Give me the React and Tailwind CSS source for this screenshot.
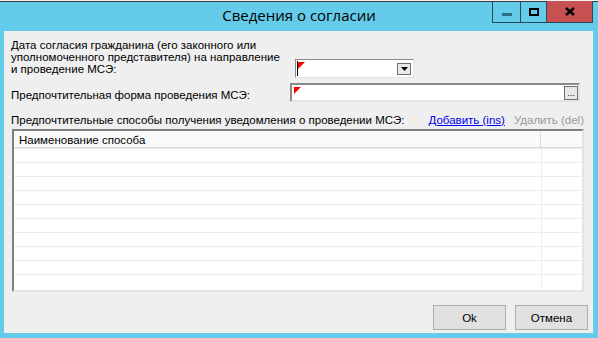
const Flag = () => (
  <svg width="7" height="7" viewBox="0 0 7 7" className="absolute left-[2px] top-[2px]">
    <polygon points="0,0 7,0 0,7" fill="#ff0000" />
  </svg>
);

const App = () => {
  const rows = Array.from({ length: 10 });

  return (
    <div
      className="w-[598px] h-[338px] bg-[#65cbea] flex flex-col overflow-hidden text-black"
      style={{ fontFamily: '"Liberation Sans", Arial, sans-serif' }}
    >
      {/* Title bar */}
      <div className="relative h-[31px] shrink-0">
        <div className="h-[1px] bg-[#f2f2f2]" />
        <div className="h-[1px] bg-[#3a3a3a]" />
        <div
          className="absolute inset-x-0 top-[4px] text-center text-[15px] leading-[22px]"
          style={{ fontFamily: '"Open Sans", "Noto Sans", sans-serif' }}
        >
          Сведения о согласии
        </div>
        <div className="absolute right-[5px] top-[1px] flex h-[22px] border border-[#2b4a55] border-t-0">
          <div className="w-[28px] flex items-center justify-center border-r border-[#2b4a55]">
            <div className="w-[10px] h-[3px] bg-[#2d6e85] mt-[5px]" />
          </div>
          <div className="w-[26px] flex items-center justify-center border-r border-[#2b4a55]">
            <div className="w-[10px] h-[8px] border-2 border-black" />
          </div>
          <div className="w-[45px] flex items-center justify-center bg-[#c75050]">
            <svg width="10" height="9" viewBox="0 0 10 9">
              <path d="M1 1 L9 8 M9 1 L1 8" stroke="#000" strokeWidth="2.4" />
            </svg>
          </div>
        </div>
      </div>

      {/* Client area */}
      <div className="ml-[4px] mr-[5px] h-[302px] bg-[#efefef] flex flex-col text-[11.5px] leading-[12px]">
        {/* Row 1 */}
        <div className="flex mt-[8px]">
          <div className="w-[284px] pl-[7px]">
            <div>Дата согласия гражданина (его законного или</div>
            <div>уполномоченного представителя) на направление</div>
            <div>и проведение МСЭ:</div>
          </div>
          <div className="ml-[7px] mt-[20px] relative w-[119px] h-[19px] bg-white border border-[#8a8a8a] border-r-[#e3e3e3] border-b-[#e3e3e3]">
            <Flag />
            <div className="absolute left-[1px] top-[1px] w-[1px] h-[15px] bg-black" />
            <div className="absolute right-[2px] top-[3px] w-[14px] h-[12px] bg-[#e8e8e8] border border-[#6f6f6f] flex items-center justify-center">
              <svg width="7" height="4" viewBox="0 0 7 4">
                <polygon points="0,0 7,0 3.5,4" fill="#000" />
              </svg>
            </div>
          </div>
        </div>

        {/* Row 2 */}
        <div className="flex mt-[5px]">
          <div className="w-[286px] pl-[7px] pt-[6px]">Предпочтительная форма проведения МСЭ:</div>
          <div className="relative w-[290px] h-[19px] bg-white border-2 border-[#8a8a8a] border-r-[#e3e3e3] border-b-[#e3e3e3]">
            <Flag />
            <div className="absolute right-[0px] top-[1px] w-[14px] h-[14px] bg-[#e8e8e8] border border-[#6f6f6f] flex items-end justify-center text-[9px] leading-[9px] pb-[1px]">
              ...
            </div>
          </div>
        </div>

        {/* Row 3 */}
        <div className="flex mt-[12px] pl-[7px] pr-[9px]">
          <div className="flex-1">Предпочтительные способы получения уведомления о проведении МСЭ:</div>
          <span className="text-[#0000ee] underline">Добавить (ins)</span>
          <span className="ml-[9px] text-[#9a9a9a]">Удалить (del)</span>
        </div>

        {/* Grid */}
        <div className="mt-[3px] ml-[8px] w-[572px] h-[163px] bg-white border-2 border-[#808080] border-r-[#e3e3e3] border-b-[#e3e3e3] overflow-hidden">
          <div className="flex h-[17px] bg-[#fafafa] border-b border-[#d8d8d8]">
            <div className="w-[527px] pl-[5px] pt-[3px] border-r border-[#dcdcdc]">Наименование способа</div>
            <div className="flex-1" />
          </div>
          {rows.map((_, i) => (
            <div key={i} className="flex h-[14px] border-t border-[#ececec]">
              <div className="w-[528px] border-r border-[#ececec]" />
              <div className="flex-1" />
            </div>
          ))}
        </div>

        {/* Buttons */}
        <div className="flex justify-end gap-[9px] mt-[13px] pr-[5px]">
          <button className="w-[73px] h-[25px] bg-[#e1e1e1] border border-[#adadad] text-[11.5px]">Ok</button>
          <button className="w-[73px] h-[25px] bg-[#e1e1e1] border border-[#adadad] text-[11.5px]">Отмена</button>
        </div>
      </div>
    </div>
  );
};

export default App;
